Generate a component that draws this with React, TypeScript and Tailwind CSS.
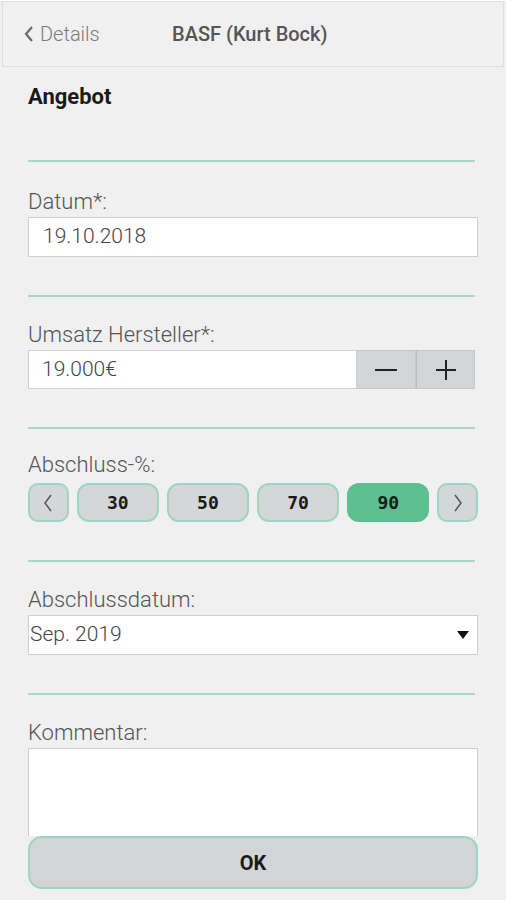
import { useState } from "react";

// Angebot-Formular (mobile). Schrift: Roboto light für Labels, Mono für Prozent-Buttons.
const font = { fontFamily: "Roboto, 'Noto Sans', sans-serif" };

function Divider() {
  return <div className="h-[2px] w-[447px] bg-[#a6d8c3]" />;
}

function Label({ children }: { children: string }) {
  return <div className="h-[26px] text-[22px] leading-[26px] font-light text-[#555]">{children}</div>;
}

export default function App() {
  const [pct, setPct] = useState(90);

  return (
    <div className="min-h-[900px] w-[506px] bg-[#f0f0f0] text-[#333]" style={font}>
      <div className="mx-[2px] mt-[1px] flex h-[66px] items-center border border-[#dedede] bg-[#f0f0f0]">
        <div className="flex w-[150px] items-center pl-[20px] text-[20px] font-light text-[#7a7a7a]">
          <svg width="12" height="20" viewBox="0 0 12 20" className="mr-[5px]">
            <path d="M9 3 L3 10 L9 17" fill="none" stroke="#6b6b6b" strokeWidth="2.2" />
          </svg>
          Details
        </div>
        <div className="ml-[19px] text-[20px] font-medium text-[#555]">BASF (Kurt Bock)</div>
      </div>

      <div className="px-[28px]">
        <div className="pt-[16px] text-[22px] leading-[28px] font-bold text-[#1a1a1a]">Angebot</div>

        <div className="mt-[49px]">
          <Divider />
          <div className="pt-[27px]">
            <Label>Datum*:</Label>
            <div className="mt-[2px] flex h-[40px] w-[450px] items-center border border-[#cfcfcf] bg-white pl-[14px] text-[21px] font-light text-[#444]">
              19.10.2018
            </div>
          </div>
        </div>

        <div className="mt-[38px]">
          <Divider />
          <div className="pt-[25px]">
            <Label>Umsatz Hersteller*:</Label>
            <div className="mt-[2px] flex h-[39px] w-[447px]">
              <div className="flex flex-1 items-center border border-[#cfcfcf] bg-white pl-[13px] text-[21px] font-light text-[#444]">
                19.000€
              </div>
              <button className="flex w-[59px] items-center justify-center border border-l-0 border-[#c7c7c7] bg-[#d3d4d5]">
                <svg width="22" height="4" viewBox="0 0 22 4"><rect x="0" y="1" width="22" height="2" fill="#222" /></svg>
              </button>
              <button className="flex w-[59px] items-center justify-center border border-l-[#bbb] border-[#c7c7c7] bg-[#d3d4d5]">
                <svg width="20" height="20" viewBox="0 0 20 20">
                  <rect x="0" y="9" width="20" height="2" fill="#222" />
                  <rect x="9" y="0" width="2" height="20" fill="#222" />
                </svg>
              </button>
            </div>
          </div>
        </div>

        <div className="mt-[38px]">
          <Divider />
          <div className="pt-[23px]">
            <Label>Abschluss-%:</Label>
            <div className="mt-[5px] flex h-[39px] w-[450px] gap-[8px]">
              <button className="flex w-[41px] items-center justify-center rounded-[10px] border-2 border-[#9ed5bf] bg-[#d5d6d7]">
                <svg width="10" height="18" viewBox="0 0 10 18"><path d="M8 1 L2 9 L8 17" fill="none" stroke="#555" strokeWidth="1.5" /></svg>
              </button>
              {[30, 50, 70, 90].map((v) => (
                <button
                  key={v}
                  onClick={() => setPct(v)}
                  className={
                    v === pct
                      ? "w-[83px] rounded-[12px] border-2 border-[#5cbf90] bg-[#5cbf90] text-[18px] font-bold text-[#1a1a1a]"
                      : "w-[83px] rounded-[12px] border-2 border-[#9ed5bf] bg-[#d5d6d7] text-[18px] font-bold text-[#1a1a1a]"
                  }
                  style={{ fontFamily: "'DejaVu Sans Mono', monospace" }}
                >
                  {v}
                </button>
              ))}
              <button className="flex w-[41px] items-center justify-center rounded-[10px] border-2 border-[#9ed5bf] bg-[#d5d6d7]">
                <svg width="10" height="18" viewBox="0 0 10 18"><path d="M2 1 L8 9 L2 17" fill="none" stroke="#555" strokeWidth="1.5" /></svg>
              </button>
            </div>
          </div>
        </div>

        <div className="mt-[38px]">
          <Divider />
          <div className="pt-[25px]">
            <Label>Abschlussdatum:</Label>
            <div className="mt-[2px] flex h-[40px] w-[450px] items-center justify-between border border-[#cfcfcf] bg-white pr-[8px] pl-[1px] text-[21px] font-light text-[#444]">
              Sep. 2019
              <svg width="12" height="8" viewBox="0 0 12 8"><path d="M0 0 H12 L6 8 Z" fill="#111" /></svg>
            </div>
          </div>
        </div>

        <div className="mt-[38px]">
          <Divider />
          <div className="pt-[25px]">
            <Label>Kommentar:</Label>
            <div className="mt-[2px] h-[88px] w-[450px] border border-b-0 border-[#cfcfcf] bg-white" />
            <button className="h-[53px] w-[450px] rounded-[14px] border-2 border-[#9ed5bf] bg-[#d3d4d5] text-[20px] font-bold text-[#1a1a1a]">
              OK
            </button>
          </div>
        </div>
      </div>
    </div>
  );
}
